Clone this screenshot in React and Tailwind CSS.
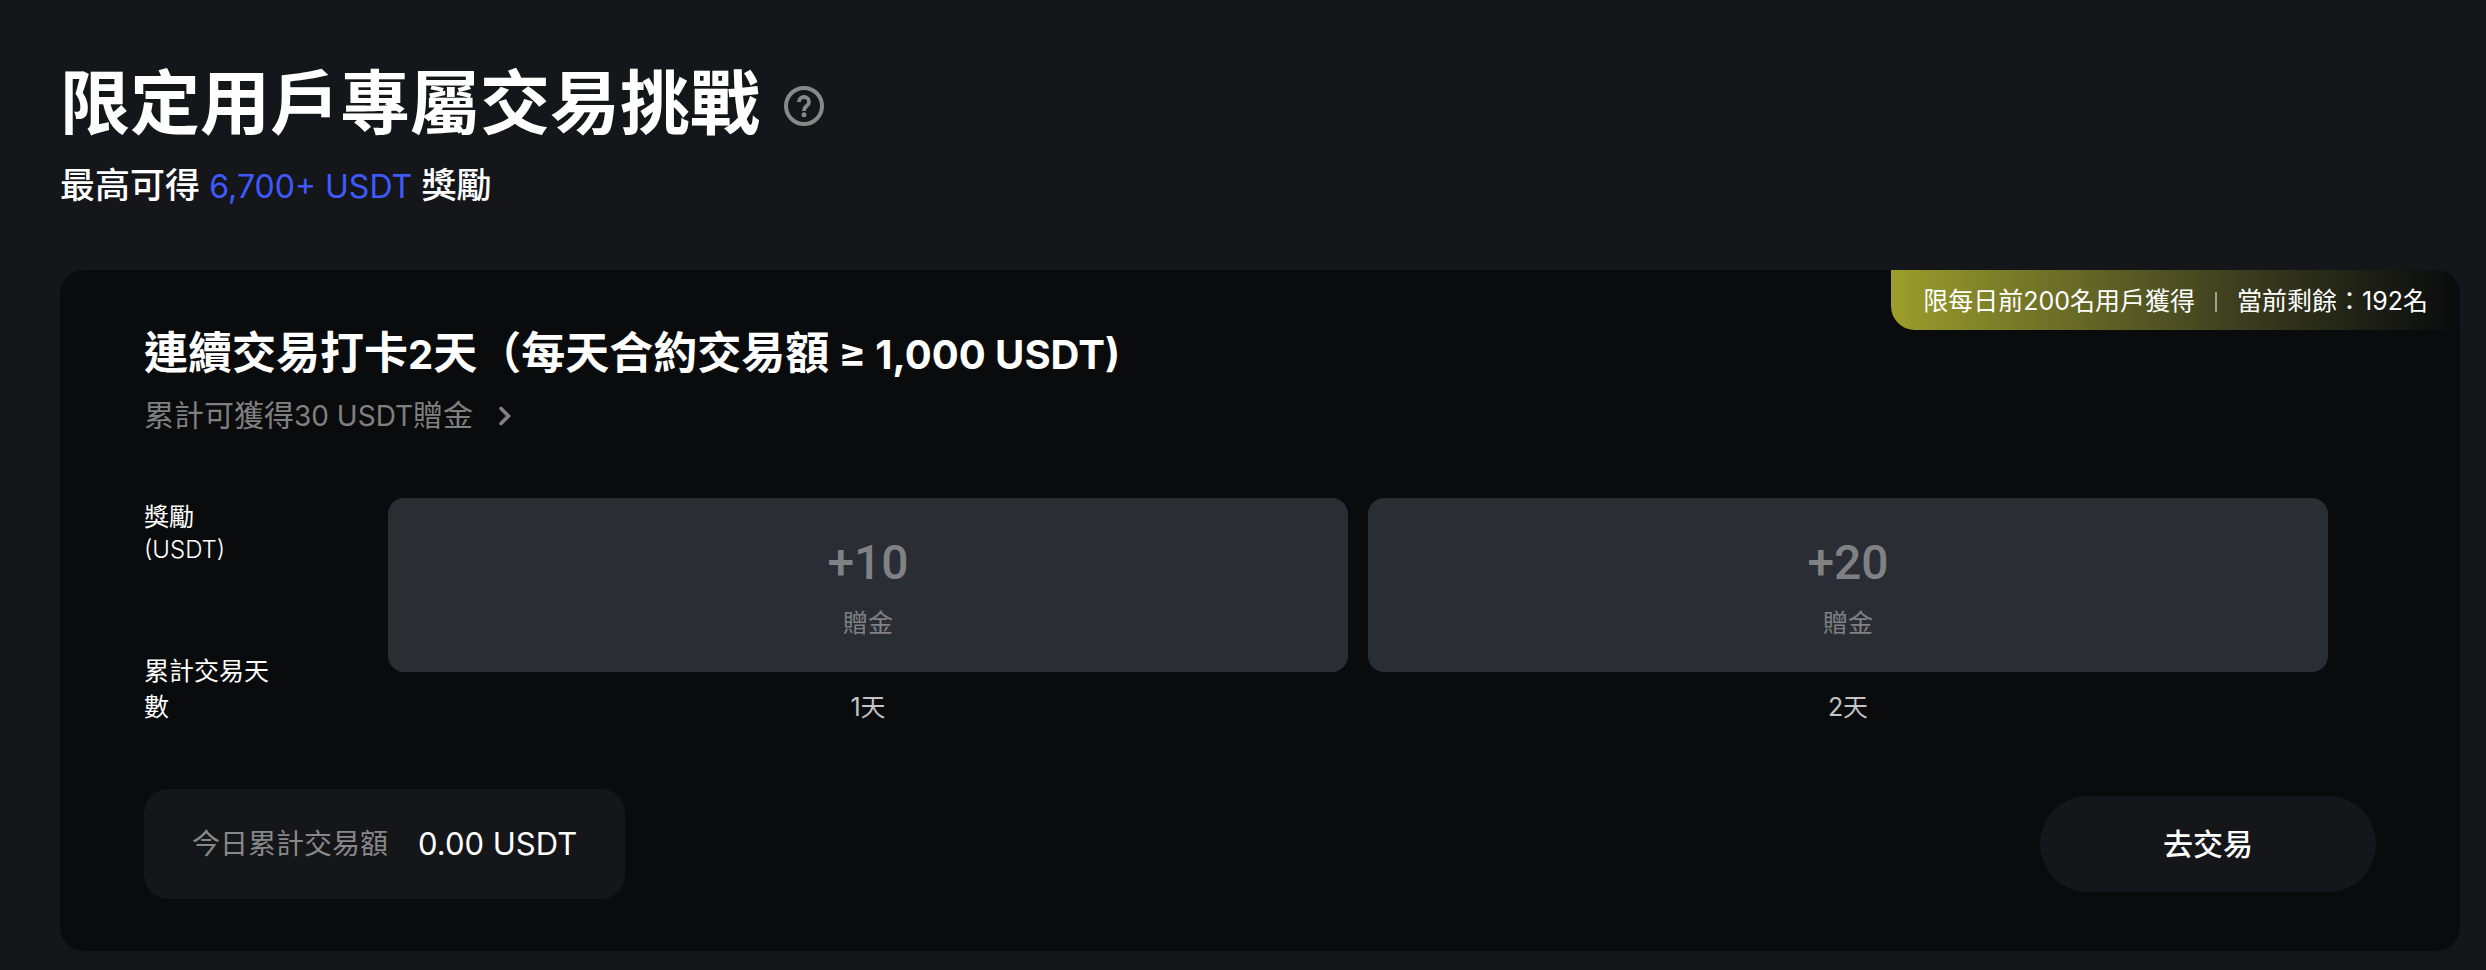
const rewards = [
  { amount: "+10", kind: "贈金", day: "1天" },
  { amount: "+20", kind: "贈金", day: "2天" },
];

function HelpIcon() {
  return (
    <svg className="size-10" viewBox="0 0 40 40" fill="none" aria-hidden="true">
      <circle cx="20" cy="20" r="18" stroke="currentColor" strokeWidth="4" />
      <path
        d="M15 16a5 5 0 0 1 10 0c0 2.2-1.2 3.2-2.6 4.3C21 21.4 20 22.6 20 25"
        stroke="currentColor"
        strokeWidth="3.8"
      />
      <circle cx="20" cy="28.8" r="2.5" fill="currentColor" />
    </svg>
  );
}

function Chevron() {
  return (
    <svg className="h-5 w-3" viewBox="0 0 12 20" fill="none" aria-hidden="true">
      <path d="M2 2.5L9.5 10 2 17.5" stroke="currentColor" strokeWidth="3.6" strokeLinecap="round" />
    </svg>
  );
}

export default function App() {
  return (
    <main
      lang="zh-Hant"
      className="min-h-screen bg-[#15161a] px-[60px] pt-16 pr-[26px] pb-5 font-['Inter','Noto_Sans_CJK_TC',sans-serif] text-white"
    >
      <header>
        <div className="flex items-center gap-6">
          <h1 className="text-[70px] leading-[80px] font-bold">限定用戶專屬交易挑戰</h1>
          <button type="button" aria-label="說明" className="mt-1 text-[#888888]">
            <HelpIcon />
          </button>
        </div>
        <p className="mt-[18px] text-[35px] leading-[46px] font-medium">
          最高可得 <span className="text-[32px] font-normal text-[#4059ff]">6,700+ USDT</span> 獎勵
        </p>
      </header>

      <section className="relative mt-[60px] overflow-hidden rounded-3xl bg-[#0a0b0d] px-[84px] pt-[55px] pb-[52px]">
        <div className="absolute top-0 right-0 flex h-[60px] items-center rounded-bl-3xl bg-linear-to-r from-[#9c9e2a] to-[#0a0b0d] px-8 pt-1 text-[25px]">
          <span>限每日前200名用戶獲得</span>
          <span className="mx-5 h-5 w-0.5 bg-white/50" />
          <span>當前剩餘：192名</span>
        </div>

        <h2 className="text-[44px] leading-[56px] font-bold">
          連續交易打卡<span className="text-[40px]">2</span>天（每天合約交易額
          <span className="text-[40px]"> ≥ 1,000 USDT)</span>
        </h2>
        <a href="#rewards" className="mt-3 inline-flex items-center gap-[26px] text-[30px] leading-10 text-[#808080]">
          <span>
            累計可獲得<span className="text-[28px]">30 USDT</span>贈金
          </span>
          <Chevron />
        </a>

        <div id="rewards" className="mt-[62px] flex pr-12">
          <div className="flex w-[244px] flex-col justify-between pt-0.5">
            <div className="w-[140px] text-[25px] leading-[34px]">
              獎勵
              <div className="text-2xl leading-8 font-light">(USDT)</div>
            </div>
            <div className="w-[140px] text-[25px] leading-9">累計交易天數</div>
          </div>
          <ul className="flex flex-1 gap-5">
            {rewards.map((r) => (
              <li key={r.day} className="flex-1 text-center">
                <div className="flex h-[174px] flex-col items-center justify-center gap-3 rounded-2xl bg-[#2b2d35] pt-1 text-[#808183]">
                  <strong className="font-['Roboto',sans-serif] text-5xl leading-[60px] font-medium">{r.amount}</strong>
                  <span className="text-[25px] leading-9">{r.kind}</span>
                </div>
                <div className="mt-[17px] text-[25px] leading-9 text-[#c4c4c4]">{r.day}</div>
              </li>
            ))}
          </ul>
        </div>

        <div className="mt-16 flex items-center justify-between">
          <div className="flex h-[110px] items-center gap-[30px] rounded-3xl bg-[#15161a] px-12">
            <span className="text-[28px] text-[#888888]">今日累計交易額</span>
            <span className="text-[31px]">0.00 USDT</span>
          </div>
          <button type="button" className="h-24 w-[336px] rounded-full bg-[#15161a] text-[30px] font-medium">
            去交易
          </button>
        </div>
      </section>
    </main>
  );
}
